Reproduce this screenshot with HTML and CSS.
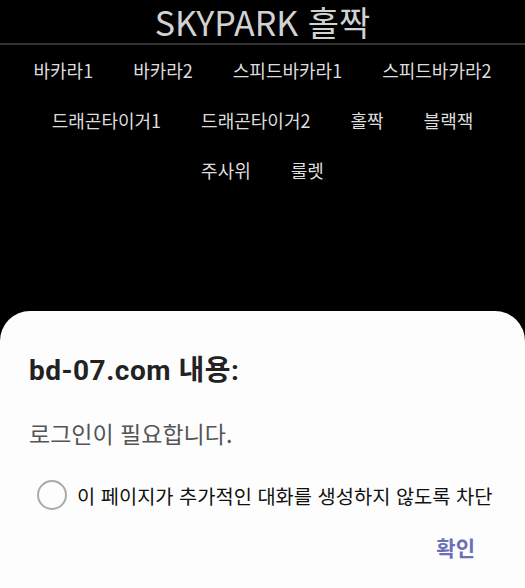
FILE: index.html
```html
<!DOCTYPE html>
<html lang="ko">
<head>
  <meta charset="UTF-8">
  <title>SKYPARK 홀짝</title>
  <link rel="stylesheet" href="styles.css">
</head>
<body>

  <header>
    <h1>SKYPARK 홀짝</h1>
  </header>

  <nav class="menu">
    <a href="#">바카라1</a>
    <a href="#">바카라2</a>
    <a href="#">스피드바카라1</a>
    <a href="#">스피드바카라2</a>
    <a href="#">드래곤타이거1</a>
    <a href="#">드래곤타이거2</a>
    <a href="#">홀짝</a>
    <a href="#">블랙잭</a>
    <a href="#">주사위</a>
    <a href="#">룰렛</a>
  </nav>

  <div class="dialog">
    <h2>bd-07.com 내용:</h2>
    <p class="message">로그인이 필요합니다.</p>
    <label class="check">
      <span class="circle"></span>
      <span class="check-text">이 페이지가 추가적인 대화를 생성하지 않도록 차단</span>
    </label>
    <div class="actions">
      <button>확인</button>
    </div>
  </div>

</body>
</html>
```

FILE: styles.css
```css
body {
  margin: 0;
  background: #000;
  color: #ddd;
  font-family: "Noto Sans CJK KR", "Noto Sans", sans-serif;
  height: 588px;
  overflow: hidden;
}
header {
  border-bottom: 2px solid #333;
  text-align: center;
}
h1 {
  margin: 0;
  padding: 2px 0 1px;
  font-size: 34px;
  font-weight: 400;
  line-height: 40px;
  color: #d2d2d2;
}
.menu {
  display: flex;
  flex-wrap: wrap;
  justify-content: center;
}
.menu a {
  color: #ddd;
  text-decoration: none;
  font-size: 18px;
  line-height: 50px;
  padding: 0 20px;
}
.dialog {
  position: fixed;
  left: 0;
  right: 0;
  bottom: 0;
  height: 277px;
  box-sizing: border-box;
  background: #fdfdfd;
  border-radius: 30px 30px 0 0;
  padding: 44px 29px 0;
}
.dialog h2 {
  margin: 0;
  font-family: Roboto, "Noto Sans CJK KR", sans-serif;
  font-size: 28px;
  font-weight: 700;
  letter-spacing: 0.5px;
  line-height: 32px;
  color: #222;
}
.message {
  margin: 32px 0 0;
  font-size: 23px;
  line-height: 28px;
  color: #555;
}
.check {
  display: flex;
  align-items: center;
  gap: 10px;
  margin: 33px 0 0 8px;
  height: 30px;
  font-size: 19.8px;
  color: #111;
}
.check-text {
  white-space: nowrap;
}
.circle {
  width: 26px;
  height: 26px;
  flex-shrink: 0;
  border: 2px solid #aaa;
  border-radius: 50%;
}
.actions {
  display: flex;
  justify-content: flex-end;
  margin-top: 22px;
}
button {
  background: none;
  border: none;
  padding: 0 21px 0 0;
  font-family: "Noto Sans CJK KR", sans-serif;
  font-size: 21px;
  font-weight: 700;
  line-height: 30px;
  color: #6b6fb6;
}
```
